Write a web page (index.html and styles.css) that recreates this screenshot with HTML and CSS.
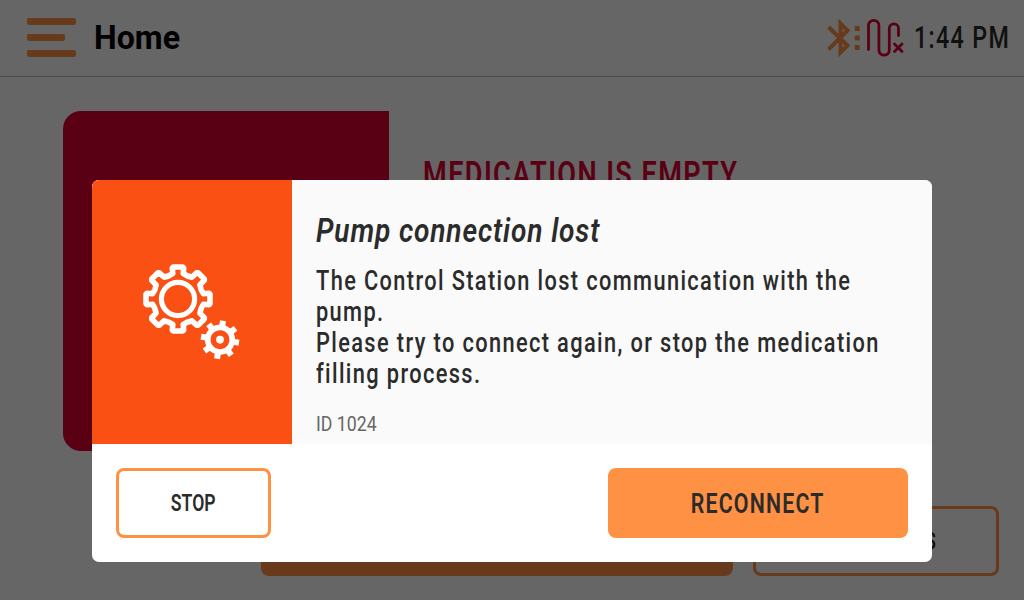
FILE: index.html
```html
<!DOCTYPE html>
<html lang="en">
<head>
<meta charset="utf-8">
<title>Home</title>
<link rel="stylesheet" href="styles.css">
</head>
<body>
<div class="screen">
  <header class="header">
    <div class="menu"><i class="bar"></i><i class="bar bar-short"></i><i class="bar"></i></div>
    <h1 class="text page-title">Home</h1>
    <div class="status">
      <svg class="status-icons" width="80" height="42" viewBox="826 16 80 42" fill="none">
        <g stroke="#fe9143" stroke-width="4"><path d="M828.500 27L847.500 45.500L840.500 52.500V23.500L847.500 30.500L828.500 49.500"/></g>
        <path fill="#fe9143" d="M854.700 26h5v5h-5zM854.700 35.500h5v5h-5zM854.700 45h5v5h-5z"/>
        <path stroke="#e10032" stroke-width="2.800" stroke-linecap="round" d="M868.500 49.500V25.500a5.200 5.200 0 0 1 10.400 0V50a5.200 5.200 0 0 0 10.400 0V28.500a4.600 4.600 0 0 1 9.200 0V35.500M894.500 44l7.500 7.500M902 44l-7.500 7.500"/>
      </svg>
      <span class="text clock">1:44 PM</span>
    </div>
  </header>
  <main class="content">
    <div class="tile"></div>
    <h2 class="text state">MEDICATION IS EMPTY</h2>
  </main>
  <footer class="actions">
    <div class="button fill"></div>
    <div class="button outline"><span class="text under-label">INSTRUCTIONS</span></div>
  </footer>
</div>
<div class="overlay">
  <section class="dialog">
    <div class="dialog-top">
      <div class="picture">
        <svg width="104" height="104" viewBox="-38 -38 104 104" fill="none" stroke="#fff">
          <circle r="16.600" stroke-width="5.200"/>
          <path stroke-width="5.600" stroke-linejoin="round" d="M-5.200-25.500L-5.700-31L-4.700-32H4.700L5.700-31L5.200-25.500Q9-22.500 14.100-21.900L18.700-26.300H20L26.300-20V-18.700L21.900-14.100Q22.500-9 25.500-5.200L31-5.700L32-4.700V4.700L31 5.700L25.500 5.200Q22.500 9 21.900 14.100L26.300 18.700V20L20 26.300H18.700L14.100 21.900Q9 22.500 5.200 25.500L5.700 31L4.700 32H-4.700L-5.700 31L-5.200 25.500Q-9 22.500-14.100 21.900L-18.700 26.300H-20L-26.300 20V18.700L-21.900 14.100Q-22.500 9-25.500 5.200L-31 5.700L-32 4.700V-4.700L-31-5.700L-25.500-5.200Q-22.500-9-21.900-14.100L-26.300-18.700V-20L-20-26.300H-18.700L-14.100-21.900Q-9-22.500-5.200-25.500Z"/>
          <g transform="translate(42 40.700) rotate(9)">
            <circle r="12.300" stroke-width="5.600"/>
            <circle r="3.900" fill="#fff" stroke="none"/>
            <path stroke-width="6" d="M0-14V-19.200M0 14V19.200M-14 0H-19.200M14 0H19.200M9.900-9.900L13.600-13.600M9.900 9.900L13.600 13.600M-9.900 9.900L-13.600 13.600M-9.900-9.900L-13.600-13.600"/>
          </g>
        </svg>
      </div>
      <div class="message">
        <h2 class="text dialog-title">Pump connection lost</h2>
        <p class="body">
          <span class="text line">The Control Station lost communication with the</span>
          <span class="text line">pump.</span>
          <span class="text line">Please try to connect again, or stop the medication</span>
          <span class="text line">filling process.</span>
        </p>
        <div class="text code">ID 1024</div>
      </div>
    </div>
    <div class="dialog-buttons">
      <div class="button outline stop"><span class="text stop-label">STOP</span></div>
      <div class="button fill reconnect"><span class="text reconnect-label">RECONNECT</span></div>
    </div>
  </section>
</div>
</body>
</html>
```
FILE: styles.css
```css
* { box-sizing: border-box; }
body { margin: 0; width: 1024px; height: 600px; overflow: hidden; font-family: Roboto, "Liberation Sans", sans-serif; color: #2b2b2b; background: #fff; }
h1, h2, p { margin: 0; }
.text { display: block; white-space: nowrap; transform-origin: left center; }
.screen { height: 600px; display: flex; flex-direction: column; }
.header { height: 77px; flex: none; display: flex; align-items: center; border-bottom: 1px solid #b4b7b6; padding: 0 0 2px 27px; }
.menu { display: flex; flex-direction: column; gap: 9px; width: 49px; }
.bar { height: 7px; border-radius: 2px; background: #fe9143; }
.bar-short { width: 38px; }
.page-title { margin-left: 18px; font-size: 34px; font-weight: 700; line-height: 40px; color: #000; transform: scaleX(.945); }
.status { margin-left: auto; width: 198px; display: flex; align-items: center; }
.status-icons { flex: none; }
.clock { margin: 2px 0 0 8px; font-size: 31px; line-height: 36px; font-weight: 500; letter-spacing: 1.8px; transform: scaleX(.75); }
.content { flex: 1; display: flex; padding: 34px 0 0 63px; gap: 34px; }
.tile { width: 326px; height: 340px; border-radius: 18px 0 0 18px; background: #e10032; }
.state { height: 44px; margin-top: 42px; font-size: 35px; line-height: 44px; font-weight: 600; letter-spacing: 1.8px; color: #e10032; transform: scaleX(.775); }
.actions { display: flex; justify-content: flex-end; gap: 20px; padding: 0 25px 24px 0; }
.button { height: 70px; border-radius: 8px; display: flex; align-items: center; justify-content: center; }
.button .text { transform-origin: center; font-weight: 600; }
.fill { width: 472px; background: #fe9143; }
.outline { width: 246px; border: 3px solid #fe9143; }
.button .under-label { font-size: 23px; transform: scaleX(.735); }
.overlay { position: absolute; inset: 0; display: flex; justify-content: center; align-items: flex-start; padding-top: 180px; background: rgba(0, 0, 0, .6); }
.dialog { width: 840px; height: 382px; border-radius: 7px; overflow: hidden; background: #fff; }
.dialog-top { height: 264px; display: flex; background: #fafafa; }
.picture { width: 200px; flex: none; background: #fb5014; display: flex; padding: 81px 0 0 48px; }
.message { padding: 31px 0 0 24px; }
.dialog-title { font-size: 33px; line-height: 40px; font-style: italic; font-weight: 600; letter-spacing: 1px; transform: scaleX(.852); }
.body { margin-top: 15px; }
.line { font-size: 27px; line-height: 31px; font-weight: 500; letter-spacing: 1.7px; transform: scaleX(.807); }
.code { margin-top: 21px; font-size: 20px; line-height: 26px; color: #666; transform: scaleX(.885); }
.dialog-buttons { display: flex; justify-content: space-between; padding: 24px; }
.stop { width: 155px; }
.reconnect { width: 300px; }
.button .stop-label { font-size: 23px; transform: scaleX(.765); }
.button .reconnect-label { margin-top: 2px; font-size: 27px; letter-spacing: 1.5px; transform: scaleX(.79); }
```
